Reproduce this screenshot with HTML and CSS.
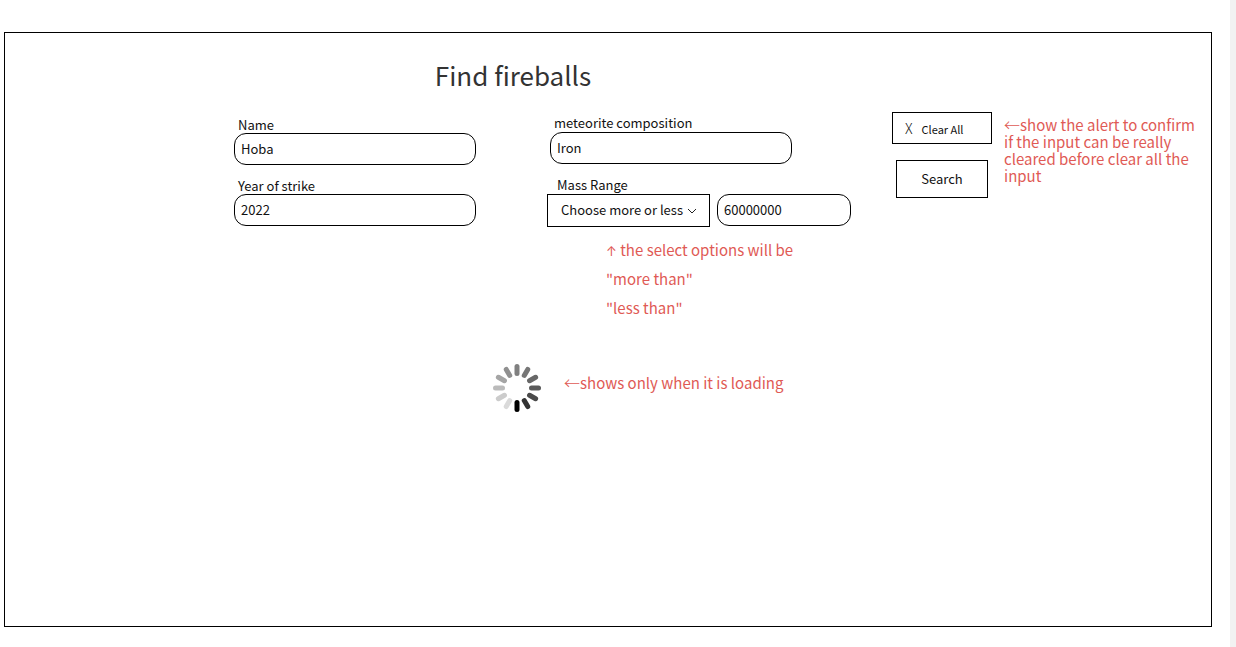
FILE: index.html
```html
<!DOCTYPE html>
<html lang="en">
<head>
<meta charset="utf-8">
<meta name="viewport" content="width=device-width, initial-scale=1">
<title>Find fireballs</title>
<link rel="stylesheet" href="styles.css">
</head>
<body>
<main class="frame">
  <form class="search">
    <h1 class="title">Find fireballs</h1>
    <div class="column column-left">
      <div class="field">
        <label for="name">Name</label>
        <input class="text-input" id="name" type="text" value="Hoba">
      </div>
      <div class="field">
        <label for="year">Year of strike</label>
        <input class="text-input" id="year" type="text" value="2022">
      </div>
    </div>
    <div class="column column-right">
      <div class="field field-composition">
        <label for="composition">meteorite composition</label>
        <input class="text-input" id="composition" type="text" value="Iron">
      </div>
      <div class="field field-mass">
        <label for="mass">Mass Range</label>
        <div class="mass-row">
          <div class="select-wrap">
            <select class="select" aria-label="Mass comparison">
              <option>Choose more or less</option>
              <option>more than</option>
              <option>less than</option>
            </select>
            <svg class="chevron" viewBox="0 0 10 6" aria-hidden="true"><path d="M1 1l4 4 4-4"/></svg>
          </div>
          <input class="text-input" id="mass" type="text" value="60000000">
        </div>
      </div>
      <p class="note note-options"><span class="up">↑</span> the select options will be<br>"more than"<br>"less than"</p>
    </div>
    <div class="actions">
      <div class="buttons">
        <button class="button clear" type="reset"><span class="cross">X</span>Clear All</button>
        <button class="button submit" type="button">Search</button>
      </div>
      <p class="note note-clear"><span class="left">←</span>show the alert to confirm if the input can be really cleared before clear all the input</p>
    </div>
    <div class="loading" role="status">
      <svg class="spinner" viewBox="-25 -25 50 50" aria-hidden="true">
        <path stroke="#808080" d="M0-14.500V-21.500"/>
        <path stroke="#777" transform="rotate(30)" d="M0-14.500V-21.500"/>
        <path stroke="#686868" transform="rotate(60)" d="M0-14.500V-21.500"/>
        <path stroke="#5a5a5a" transform="rotate(90)" d="M0-14.500V-21.500"/>
        <path stroke="#4a4a4a" transform="rotate(120)" d="M0-14.500V-21.500"/>
        <path stroke="#333" transform="rotate(150)" d="M0-14.500V-21.500"/>
        <path stroke="#000" transform="rotate(180)" d="M0-14.500V-21.500"/>
        <path stroke="#dadada" transform="rotate(210)" d="M0-14.500V-21.500"/>
        <path stroke="#ccc" transform="rotate(240)" d="M0-14.500V-21.500"/>
        <path stroke="#bbb" transform="rotate(270)" d="M0-14.500V-21.500"/>
        <path stroke="#a5a5a5" transform="rotate(300)" d="M0-14.500V-21.500"/>
        <path stroke="#909090" transform="rotate(330)" d="M0-14.500V-21.500"/>
      </svg>
      <p class="note"><span class="left">←</span>shows only when it is loading</p>
    </div>
  </form>
</main>
</body>
</html>
```
FILE: styles.css
```css
* {
  box-sizing: border-box;
}

body {
  margin: 0;
  min-height: 100vh;
  display: flex;
  padding: 32px 18px 20px 4px;
  border-right: 6px solid #f2f2f2;
  background: #fff;
  color: #111;
  font: 13px/18px "Noto Sans CJK SC", "Noto Sans", sans-serif;
}

.frame {
  flex: 1;
  border: 1px solid #000;
}

.search {
  display: grid;
  grid-template-columns: 229fr 242px 71fr 304px 41fr 308px 11fr;
}

.title {
  grid-column: 2 / 5;
  margin: 25px 59px 20px 0;
  text-align: center;
  font-size: 26px;
  line-height: 34px;
  font-weight: 400;
  color: #333;
}

.column {
  grid-row: 2;
  display: flex;
  flex-direction: column;
  gap: 12px;
}

.column-left {
  grid-column: 2;
  padding-top: 4px;
}

.column-right {
  grid-column: 4;
  padding-top: 2px;
}

.field {
  display: flex;
  flex-direction: column;
}

.field label {
  height: 18px;
  padding-left: 4px;
}

.column-left .field label {
  height: 17px;
}

.text-input {
  width: 100%;
  min-width: 0;
  height: 32px;
  padding: 0 6px 2px;
  border: 1px solid #000;
  border-radius: 12px;
  background: #fff;
  color: #111;
  font: inherit;
}

.field-composition {
  padding: 0 59px 0 3px;
}

.field-mass label {
  padding-left: 10px;
}

.mass-row {
  display: grid;
  grid-template-columns: 163px 1fr;
  gap: 7px;
}

.select-wrap {
  position: relative;
}

.select {
  display: block;
  width: 100%;
  height: 33px;
  padding: 0 0 2px 13px;
  appearance: none;
  border: 1px solid #000;
  border-radius: 0;
  background: #fff;
  color: #111;
  font: inherit;
}

.chevron {
  position: absolute;
  right: 13px;
  top: 14px;
  width: 10px;
  height: 6px;
  fill: none;
  stroke: #222;
  pointer-events: none;
}

.note {
  margin: 0;
  color: #e05a55;
  font-size: 15px;
}

.note-options {
  margin: -4px 0 0 59px;
  line-height: 29px;
}

.up {
  font-family: "Inter", sans-serif;
  font-size: 13px;
  line-height: 1;
}

.left {
  font-size: 16px;
  font-weight: 300;
  line-height: 1;
}

.actions {
  grid-area: 2 / 6;
  display: grid;
  grid-template-columns: 100px 1fr;
  gap: 12px;
}

.buttons {
  display: flex;
  flex-direction: column;
  align-items: center;
  gap: 16px;
}

.button {
  border: 1px solid #000;
  background: #fff;
  color: #111;
  font: inherit;
}

.clear {
  width: 100%;
  height: 32px;
  padding: 0 12px;
  text-align: left;
  font-size: 11px;
}

.cross {
  margin-right: 9px;
  font-size: 14px;
  font-weight: 300;
}

.submit {
  width: 92px;
  height: 38px;
}

.note-clear {
  padding-top: 4px;
  line-height: 17px;
}

.loading {
  grid-area: 3 / 2 / 4 / 7;
  display: flex;
  gap: 22px;
  padding: 41px 0 0 258px;
}

.loading .note {
  padding-top: 11px;
}

.spinner {
  width: 50px;
  height: 50px;
  fill: none;
  stroke-width: 5;
  stroke-linecap: round;
}
```
